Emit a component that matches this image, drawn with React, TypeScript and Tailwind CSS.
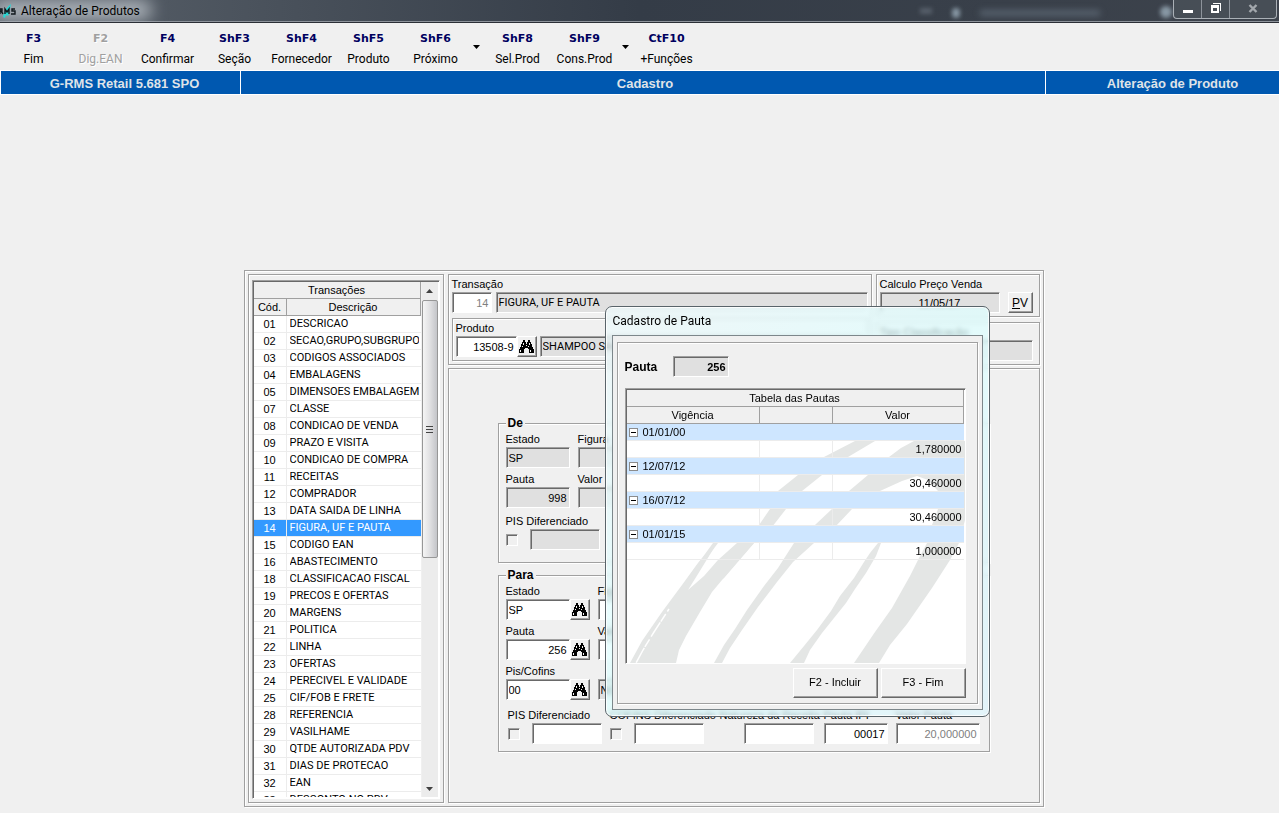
import { Fragment, useState } from 'react';
import type { ReactNode } from 'react';
import clsx from 'clsx';

const ETCHED = 'border border-[#a0a0a0] shadow-[inset_1px_1px_0_#fff,1px_1px_0_#fff]';
const SUNKEN =
  'border border-t-[#a0a0a0] border-l-[#a0a0a0] border-r-white border-b-white shadow-[inset_1px_1px_0_#696969]';
const RAISED =
  'border border-t-white border-l-white border-r-[#696969] border-b-[#696969] bg-[#f0f0f0] shadow-[inset_-1px_-1px_0_#a0a0a0]';

const transactions: Array<[string, string]> = [
  ['01', 'DESCRICAO'],
  ['02', 'SECAO,GRUPO,SUBGRUPO'],
  ['03', 'CODIGOS ASSOCIADOS'],
  ['04', 'EMBALAGENS'],
  ['05', 'DIMENSOES EMBALAGEM'],
  ['07', 'CLASSE'],
  ['08', 'CONDICAO DE VENDA'],
  ['09', 'PRAZO E VISITA'],
  ['10', 'CONDICAO DE COMPRA'],
  ['11', 'RECEITAS'],
  ['12', 'COMPRADOR'],
  ['13', 'DATA SAIDA DE LINHA'],
  ['14', 'FIGURA, UF E PAUTA'],
  ['15', 'CODIGO EAN'],
  ['16', 'ABASTECIMENTO'],
  ['18', 'CLASSIFICACAO FISCAL'],
  ['19', 'PRECOS E OFERTAS'],
  ['20', 'MARGENS'],
  ['21', 'POLITICA'],
  ['22', 'LINHA'],
  ['23', 'OFERTAS'],
  ['24', 'PERECIVEL E VALIDADE'],
  ['25', 'CIF/FOB E FRETE'],
  ['28', 'REFERENCIA'],
  ['29', 'VASILHAME'],
  ['30', 'QTDE AUTORIZADA PDV'],
  ['31', 'DIAS DE PROTECAO'],
  ['32', 'EAN'],
  ['33', 'DESCONTO NO PDV'],
];

const pautas = [
  { vigencia: '01/01/00', valor: '1,780000' },
  { vigencia: '12/07/12', valor: '30,460000' },
  { vigencia: '16/07/12', valor: '30,460000' },
  { vigencia: '01/01/15', valor: '1,000000' },
];

interface ToolItem {
  hotkey: string;
  label: string;
  disabled?: boolean;
  menu?: boolean;
}

const tools: ToolItem[] = [
  { hotkey: 'F3', label: 'Fim' },
  { hotkey: 'F2', label: 'Dig.EAN', disabled: true },
  { hotkey: 'F4', label: 'Confirmar' },
  { hotkey: 'ShF3', label: 'Seção' },
  { hotkey: 'ShF4', label: 'Fornecedor' },
  { hotkey: 'ShF5', label: 'Produto' },
  { hotkey: 'ShF6', label: 'Próximo', menu: true },
  { hotkey: 'ShF8', label: 'Sel.Prod' },
  { hotkey: 'ShF9', label: 'Cons.Prod', menu: true },
  { hotkey: 'CtF10', label: '+Funções' },
];

/* ---------- Small controls ---------- */

interface BoxProps {
  id?: string;
  name?: string;
  value?: string;
  className?: string;
  locked?: boolean;
}

function Box({ id, name, value = '', className, locked }: BoxProps) {
  return (
    <input
      id={id}
      aria-label={name}
      defaultValue={value}
      readOnly={locked}
      className={clsx(
        'block h-[21px] min-w-0 shrink-0 rounded-none px-0.5 leading-4 outline-none',
        SUNKEN,
        locked ? 'bg-[#e0e0e0]' : 'bg-white',
        className,
      )}
    />
  );
}

function Caption({ htmlFor, children }: { htmlFor: string; children: ReactNode }) {
  return (
    <label htmlFor={htmlFor} className="mb-px block h-3.5 leading-3.5 whitespace-nowrap">
      {children}
    </label>
  );
}

function SearchButton({ name }: { name: string }) {
  return (
    <button
      type="button"
      aria-label={name}
      className={clsx('flex h-[21px] w-5 shrink-0 items-center justify-center', RAISED)}
    >
      <svg width="15" height="13" viewBox="0 0 15 13" shapeRendering="crispEdges" aria-hidden="true">
        <path d="M4 0H6V2H7V4H8V2H9V0H11V2H12V4H13V7H14V9H15V13H10V9H9V8H6V9H5V13H0V9H1V7H2V4H3V2H4Z" />
        <path
          fill="#f4f4f4"
          d="M4 3h1v2H4zM3 6h1v1H3zM1 10h1v2H1zM10 3h1v2h-1zM9 6h1v1H9zM11 10h1v2h-1zM7 5h1v1H7z"
        />
      </svg>
    </button>
  );
}

function Check({ name }: { name: string }) {
  return (
    <input
      type="checkbox"
      aria-label={name}
      className={clsx('mr-3 block h-3 w-3 shrink-0 appearance-none bg-[#f0f0f0]', SUNKEN)}
    />
  );
}

/* ---------- Window frame ---------- */

function TitleBar() {
  return (
    <header className="relative flex h-[23px] items-start justify-between overflow-hidden border-b border-[#2b2f36] bg-linear-to-r from-[#5a626b] via-[#343c47] to-[#3d434c] shadow-[inset_0_-1px_0_#8d939b]">
      <div className="absolute top-0 -left-2 h-5 w-40 rounded-full bg-[#c3c9cf]/80 blur-[8px]" />
      <div className="absolute top-2 left-[952px] h-2.5 w-2 rounded-full bg-[#a8bccb]/70 blur-[2px]" />
      <div className="absolute top-2 left-[920px] h-1.5 w-3 bg-[#76808b]/50 blur-[2px]" />
      <div className="absolute top-2.5 left-[980px] h-1.5 w-30 bg-[#6b7886]/60 blur-[3px]" />
      <div className="absolute top-1.5 left-[1160px] h-3 w-3 rounded-full bg-[#a8bccb]/70 blur-[2px]" />
      <h1 className="relative flex h-[21px] items-center gap-[5px] font-['Roboto',sans-serif] text-[12px] leading-5 text-black">
        <svg width="16" height="16" viewBox="0 0 16 16" aria-hidden="true">
          <path d="M3 14C4 9 6 5 11 1L10 6L8 8L10 9L8 13L6 12L5 15Z" fill="#27d7d3" />
          <path
            d="M0 6v5M0 6h2v2H0M1 8l2 3M5 11V6l2 3l2-3v5M15 6h-3v2h3v3h-4"
            fill="none"
            stroke="#10181c"
            strokeWidth="1.4"
          />
        </svg>
        Alteração de Produtos
      </h1>
      <div className="relative mr-0.5 flex h-[19px] overflow-hidden rounded-b border border-t-0 border-[#aab0b6] bg-[#4a5159]/80">
        <button type="button" aria-label="Minimizar" className="flex w-7 items-center justify-center border-r border-[#8d939b]">
          <span className="mt-1 h-[3px] w-2.5 bg-white" />
        </button>
        <button type="button" aria-label="Restaurar" className="flex w-7 items-start justify-center border-r border-[#8d939b] pt-[3px]">
          <svg width="10" height="10" viewBox="0 0 10 10" shapeRendering="crispEdges" aria-hidden="true">
            <path d="M2 0H10V8H9V1H2ZM0 2H8V10H0ZM2 5V8H6V5Z" fill="#fff" fillRule="evenodd" />
          </svg>
        </button>
        <button type="button" aria-label="Fechar" className="flex w-[46px] items-start justify-center pt-1">
          <svg width="10" height="9" viewBox="0 0 10 9" aria-hidden="true">
            <path d="M1.5 1L8.5 8M8.5 1L1.5 8" stroke="#a3a8ad" strokeWidth="2.4" />
          </svg>
        </button>
      </div>
    </header>
  );
}

function Toolbar() {
  return (
    <nav className="flex h-12 items-stretch border-b border-white">
      {tools.map((tool) => (
        <Fragment key={tool.hotkey}>
          <button
            type="button"
            disabled={tool.disabled}
            className={clsx(
              'flex w-[67px] shrink-0 flex-col items-center pt-2',
              tool.disabled && 'text-[#a0a0a0] [text-shadow:1px_1px_0_#fff]',
            )}
          >
            <span
              className={clsx(
                "font-['DejaVu_Sans',sans-serif] text-[11px] leading-4 font-bold",
                !tool.disabled && 'text-[#00005f]',
              )}
            >
              {tool.hotkey}
            </span>
            <span className="mt-1 font-['Roboto',sans-serif] text-[12px] leading-4 whitespace-nowrap">
              {tool.label}
            </span>
          </button>
          {tool.menu && (
            <button type="button" aria-label={`Opções ${tool.label}`} className="flex w-[15px] items-center justify-center">
              <svg width="7" height="4" viewBox="0 0 7 4" aria-hidden="true">
                <path d="M0 0H7L3.5 4Z" />
              </svg>
            </button>
          )}
        </Fragment>
      ))}
    </nav>
  );
}

function Banner() {
  return (
    <div className="flex h-6 items-stretch border-b border-l border-white bg-[#0058b0] text-center text-[13px] leading-[26px] font-bold text-[#dfe3e8]">
      <span className="w-60 border-r border-white pl-2">G-RMS Retail 5.681 SPO</span>
      <span className="flex-1 border-r border-white pl-1">Cadastro</span>
      <span className="w-[233px] pl-5">Alteração de Produto</span>
    </div>
  );
}

/* ---------- Transactions list ---------- */

const HEAD = 'h-[17px] border-r border-b border-[#a0a0a0] bg-[#f0f0f0] p-0 text-center font-normal leading-4';

function TransactionList() {
  const [selected, setSelected] = useState('14');

  return (
    <section className={clsx('w-[196px] shrink-0 px-[3px] pt-[5px] pb-[3px]', ETCHED)}>
      <div className={clsx('flex h-[519px] overflow-hidden bg-white p-px', SUNKEN)}>
        <div className="min-w-0 flex-1 overflow-hidden">
          <table className="w-full table-fixed border-separate border-spacing-0">
            <colgroup>
              <col className="w-[33px]" />
              <col />
            </colgroup>
            <thead>
              <tr>
                <th colSpan={2} className={HEAD}>Transações</th>
              </tr>
              <tr>
                <th className={HEAD}>Cód.</th>
                <th className={HEAD}>Descrição</th>
              </tr>
            </thead>
            <tbody>
              {transactions.map(([code, name]) => (
                <tr
                  key={code}
                  onClick={() => setSelected(code)}
                  className={code === selected ? 'bg-[#3399ff] text-white' : undefined}
                >
                  <td className="h-[17px] border-r border-b border-[#ececec] p-0 text-center leading-4">{code}</td>
                  <td className="h-[17px] border-b border-[#ececec] py-0 pr-0.5 pl-[3px] font-['Roboto',sans-serif] leading-4">
                    <div className="overflow-hidden whitespace-nowrap">{name}</div>
                  </td>
                </tr>
              ))}
            </tbody>
          </table>
        </div>
        <div className="flex w-[17px] flex-col border-l border-[#f0f0f0] bg-[#ececec]">
          <button type="button" aria-label="Subir" className="flex h-[18px] items-center justify-center">
            <svg width="7" height="4" viewBox="0 0 7 4" aria-hidden="true">
              <path d="M0 4H7L3.5 0Z" fill="#404040" />
            </svg>
          </button>
          <div className="flex-1">
            <div className="flex h-[258px] flex-col items-center justify-center gap-0.5 rounded-xs border border-[#979797] bg-linear-to-r from-[#f5f5f5] via-[#e0e0e2] to-[#c4c5c9]">
              <span className="h-px w-[7px] bg-[#444]" />
              <span className="h-px w-[7px] bg-[#444]" />
              <span className="h-px w-[7px] bg-[#444]" />
            </div>
          </div>
          <button type="button" aria-label="Descer" className="flex h-[17px] items-center justify-center">
            <svg width="7" height="4" viewBox="0 0 7 4" aria-hidden="true">
              <path d="M0 0H7L3.5 4Z" fill="#404040" />
            </svg>
          </button>
        </div>
      </div>
    </section>
  );
}

/* ---------- Product header ---------- */

function ProductHeader() {
  return (
    <div className="flex gap-1">
      <section className={clsx('min-w-0 flex-1 px-[3px] pt-0.5 pb-[3px]', ETCHED)}>
        <Caption htmlFor="transacao">Transação</Caption>
        <div className="flex gap-1">
          <Box id="transacao" value="14" className="w-10 text-right text-[#808080]" />
          <Box
            name="Descrição da transação"
            value="FIGURA, UF E PAUTA"
            locked
            className="flex-1 font-['Roboto',sans-serif]"
          />
        </div>
        <div className={clsx('mt-[5px] px-[3px] pt-0.5 pb-[3px]', ETCHED)}>
          <Caption htmlFor="produto">Produto</Caption>
          <div className="flex">
            <Box id="produto" value="13508-9" className="w-[61px] text-right" />
            <SearchButton name="Procurar produto" />
            <Box
              name="Descrição do produto"
              value="SHAMPOO SACHE"
              locked
              className="ml-[3px] flex-1 font-['Roboto',sans-serif]"
            />
          </div>
        </div>
      </section>
      <div className="flex w-[164px] flex-col gap-[5px]">
        <section className={clsx('px-[3px] pt-0.5 pb-[3px]', ETCHED)}>
          <Caption htmlFor="calculo">Calculo Preço Venda</Caption>
          <div className="flex gap-2">
            <Box id="calculo" value="11/05/17" locked className="w-30 text-center" />
            <button type="button" className={clsx('h-[21px] w-[25px] text-[12px] leading-4', RAISED)}>
              <u>P</u>V
            </button>
          </div>
        </section>
        <section className={clsx('px-[3px] pt-0.5 pb-[3px]', ETCHED)}>
          <Caption htmlFor="classificacao">Tipo Classificação</Caption>
          <Box id="classificacao" locked className="w-[153px]" />
        </section>
      </div>
    </div>
  );
}

/* ---------- De / Para ---------- */

const GROUP = 'border border-[#a0a0a0] pt-0.5 pl-[7px] shadow-[inset_1px_1px_0_#fff,1px_1px_0_#fff]';
const LEGEND = 'h-3.5 bg-[#f0f0f0] px-0.5 text-[12px] leading-3.5 font-bold';

function FromGroup() {
  return (
    <fieldset className={clsx('pb-3', GROUP)}>
      <legend className={LEGEND}>De</legend>
      <div className="grid grid-cols-[64px_64px] gap-x-2 gap-y-1">
        <div>
          <Caption htmlFor="de-estado">Estado</Caption>
          <Box id="de-estado" value="SP" locked className="w-full" />
        </div>
        <div>
          <Caption htmlFor="de-figura">Figura</Caption>
          <Box id="de-figura" locked className="w-full" />
        </div>
        <div>
          <Caption htmlFor="de-pauta">Pauta</Caption>
          <Box id="de-pauta" value="998" locked className="w-full text-right" />
        </div>
        <div>
          <Caption htmlFor="de-valor">Valor</Caption>
          <Box id="de-valor" locked className="w-full" />
        </div>
      </div>
      <div className="mt-1.5">
        <Caption htmlFor="de-pis">PIS Diferenciado</Caption>
        <div className="flex items-center">
          <Check name="Usar PIS diferenciado de origem" />
          <Box id="de-pis" locked className="w-[70px]" />
        </div>
      </div>
    </fieldset>
  );
}

function ToGroup() {
  return (
    <fieldset className={clsx('mt-[5px] pb-[7px]', GROUP)}>
      <legend className={LEGEND}>Para</legend>
      <div className="grid grid-cols-[84px_64px] gap-x-2 gap-y-1">
        <div>
          <Caption htmlFor="estado">Estado</Caption>
          <div className="flex">
            <Box id="estado" value="SP" className="w-16" />
            <SearchButton name="Procurar estado" />
          </div>
        </div>
        <div>
          <Caption htmlFor="figura">Figura</Caption>
          <Box id="figura" className="w-full" />
        </div>
        <div>
          <Caption htmlFor="pauta">Pauta</Caption>
          <div className="flex">
            <Box id="pauta" value="256" className="w-16 text-right" />
            <SearchButton name="Procurar pauta" />
          </div>
        </div>
        <div>
          <Caption htmlFor="valor">Valor</Caption>
          <Box id="valor" className="w-full" />
        </div>
        <div>
          <Caption htmlFor="pis-cofins">Pis/Cofins</Caption>
          <div className="flex">
            <Box id="pis-cofins" value="00" className="w-16" />
            <SearchButton name="Procurar Pis/Cofins" />
          </div>
        </div>
        <div className="flex items-end">
          <Box name="Descrição Pis/Cofins" value="NORMAL" locked className="w-[200px]" />
        </div>
      </div>
      <div className="mt-2 flex gap-2 pl-0.5">
        <div className="w-[94px]">
          <Caption htmlFor="pis">PIS Diferenciado</Caption>
          <div className="flex items-center">
            <Check name="Usar PIS diferenciado" />
            <Box id="pis" className="w-[70px]" />
          </div>
        </div>
        <div className="w-[94px]">
          <Caption htmlFor="cofins">COFINS Diferenciado</Caption>
          <div className="flex items-center">
            <Check name="Usar COFINS diferenciado" />
            <Box id="cofins" className="w-[70px]" />
          </div>
        </div>
        <div className="ml-2 w-24">
          <Caption htmlFor="natureza">Natureza da Receita</Caption>
          <Box id="natureza" className="ml-6 w-[70px]" />
        </div>
        <div className="w-16">
          <Caption htmlFor="pauta-ipi">Pauta IPI</Caption>
          <Box id="pauta-ipi" value="00017" className="w-full text-right" />
        </div>
        <div className="w-[84px]">
          <Caption htmlFor="valor-pauta">Valor Pauta</Caption>
          <Box id="valor-pauta" value="20,000000" className="w-full text-right text-[#808080]" />
        </div>
      </div>
    </fieldset>
  );
}

/* ---------- Dialog ---------- */

function Brushes() {
  return (
    <svg
      className="absolute right-0 bottom-0"
      width="336"
      height="222"
      viewBox="627 441 336 222"
      fill="#e4e6e5"
      aria-hidden="true"
    >
      <path d="M628 663L640 641L660 612L680 585L696 563L713 543H741L755 528L768 509L776 491L796 475L822 457L853 441H873L846 457L820 475L800 491L784 509L770 527L752 543L725 574L710 592L698 612L684 636L677 650L674 663Z" />
      <path d="M712 663L722 645L733 629L745 610L762 586L776 568L792 543L813 525L830 509L847 491L866 475L887 457L899 448L912 441H963V520L957 543L948 560L930 588L905 624L888 645L877 663H852L873 632L890 608L908 576L916 560L925 543L930 525L936 509V491L926 480L915 476L900 481L878 491L850 509L833 527L812 543L791 562L775 582L756 607L740 630L728 648L720 663Z" />
      <path d="M788 663L802 646L815 630L829 611L838 596L852 578L862 562L868 553L876 543H879L874 556L864 573L853 589L844 603L832 618L820 633L808 650L802 663Z" />
      <path d="M715 543L741 543L724 556L708 570L700 582L686 590L696 574Z" fill="#fff" />
      <path d="M711 543H716L704 559L692 574L684 586L676 594L690 572Z" />
      <path d="M735 543H752L722 578L704 590L680 610L686 590L702 576L716 560Z" />
      <g stroke="#fff" fill="none">
        <path d="M667 609L652 632L641 650L634 663" strokeWidth="1.5" strokeDasharray="3 3 9 1 14 0" />
      </g>
    </svg>
  );
}

function PautaDialog() {
  return (
    <div
      role="dialog"
      aria-labelledby="dialog-title"
      className="absolute top-[35px] left-[360px] w-[385px] rounded-[7px] border border-[#59646a] bg-linear-to-br from-[#ecf8fa]/70 via-[#dcfeff]/70 to-[#dcf4fc]/70 px-1.5 pb-1.5 shadow-[inset_0_0_0_1px_rgba(255,255,255,0.8)] backdrop-blur-[2px]"
    >
      <h2
        id="dialog-title"
        className="h-7 pl-px font-['Roboto',sans-serif] text-[12px] leading-7 text-black"
      >
        Cadastro de Pauta
      </h2>
      <div className="border border-[#7d878b] bg-[#f0f0f0] px-1 pt-1.5 pb-[5px]">
        <div className={clsx('pt-[13px] pr-[11px] pb-[5px] pl-[7px]', ETCHED)}>
          <div className="flex items-center">
            <label htmlFor="dialog-pauta" className="w-12 text-[12px] leading-5 font-bold">Pauta</label>
            <Box id="dialog-pauta" value="256" locked className="w-14 text-right font-bold" />
          </div>
          <div className={clsx('relative mt-[11px] h-[276px] overflow-hidden bg-white p-px', SUNKEN)}>
            <Brushes />
            <table className="relative w-full table-fixed border-separate border-spacing-0">
              <colgroup>
                <col className="w-[133px]" />
                <col className="w-[73px]" />
                <col />
              </colgroup>
              <thead>
                <tr>
                  <th colSpan={3} className={HEAD}>Tabela das Pautas</th>
                </tr>
                <tr>
                  <th className={HEAD}>Vigência</th>
                  <th className={HEAD} />
                  <th className={HEAD}>Valor</th>
                </tr>
              </thead>
              <tbody>
                {pautas.map((pauta) => (
                  <Fragment key={pauta.vigencia}>
                    <tr className="bg-[#cee6ff]">
                      <td colSpan={3} className="h-[17px] border-b border-[#ececec] p-0 leading-4">
                        <div className="flex items-center gap-[5px] pl-0.5">
                          <button
                            type="button"
                            aria-label={`Recolher ${pauta.vigencia}`}
                            className="flex h-[9px] w-[9px] items-center justify-center border border-[#8c8c8c] bg-white"
                          >
                            <span className="h-px w-[5px] bg-black" />
                          </button>
                          {pauta.vigencia}
                        </div>
                      </td>
                    </tr>
                    <tr>
                      <td className="h-[17px] border-r border-b border-[#ececec] p-0" />
                      <td className="h-[17px] border-r border-b border-[#ececec] p-0" />
                      <td className="h-[17px] border-b border-[#ececec] py-0 pr-0.5 pl-0 text-right leading-4">
                        {pauta.valor}
                      </td>
                    </tr>
                  </Fragment>
                ))}
              </tbody>
            </table>
          </div>
          <div className="mt-1 flex justify-end gap-[3px]">
            <button type="button" className={clsx('h-[30px] w-[85px] pb-0.5', RAISED)}>F2 - Incluir</button>
            <button type="button" className={clsx('h-[30px] w-[85px] pb-0.5', RAISED)}>F3 - Fim</button>
          </div>
        </div>
      </div>
    </div>
  );
}

export default function App() {
  return (
    <div className="flex min-h-screen flex-col bg-[#f0f0f0] font-['Liberation_Sans',Arial,sans-serif] text-[11px] text-black">
      <TitleBar />
      <Toolbar />
      <Banner />
      <main className="flex flex-1 items-end justify-center pb-1.5 pl-2">
        <div className={clsx('relative flex w-[800px] items-stretch gap-1 p-[3px]', ETCHED)}>
          <TransactionList />
          <div className="flex min-w-0 flex-1 flex-col gap-[3px]">
            <ProductHeader />
            <section className={clsx('flex-1 px-[49px] pt-[47px]', ETCHED)}>
              <FromGroup />
              <ToGroup />
            </section>
          </div>
          <PautaDialog />
        </div>
      </main>
    </div>
  );
}
